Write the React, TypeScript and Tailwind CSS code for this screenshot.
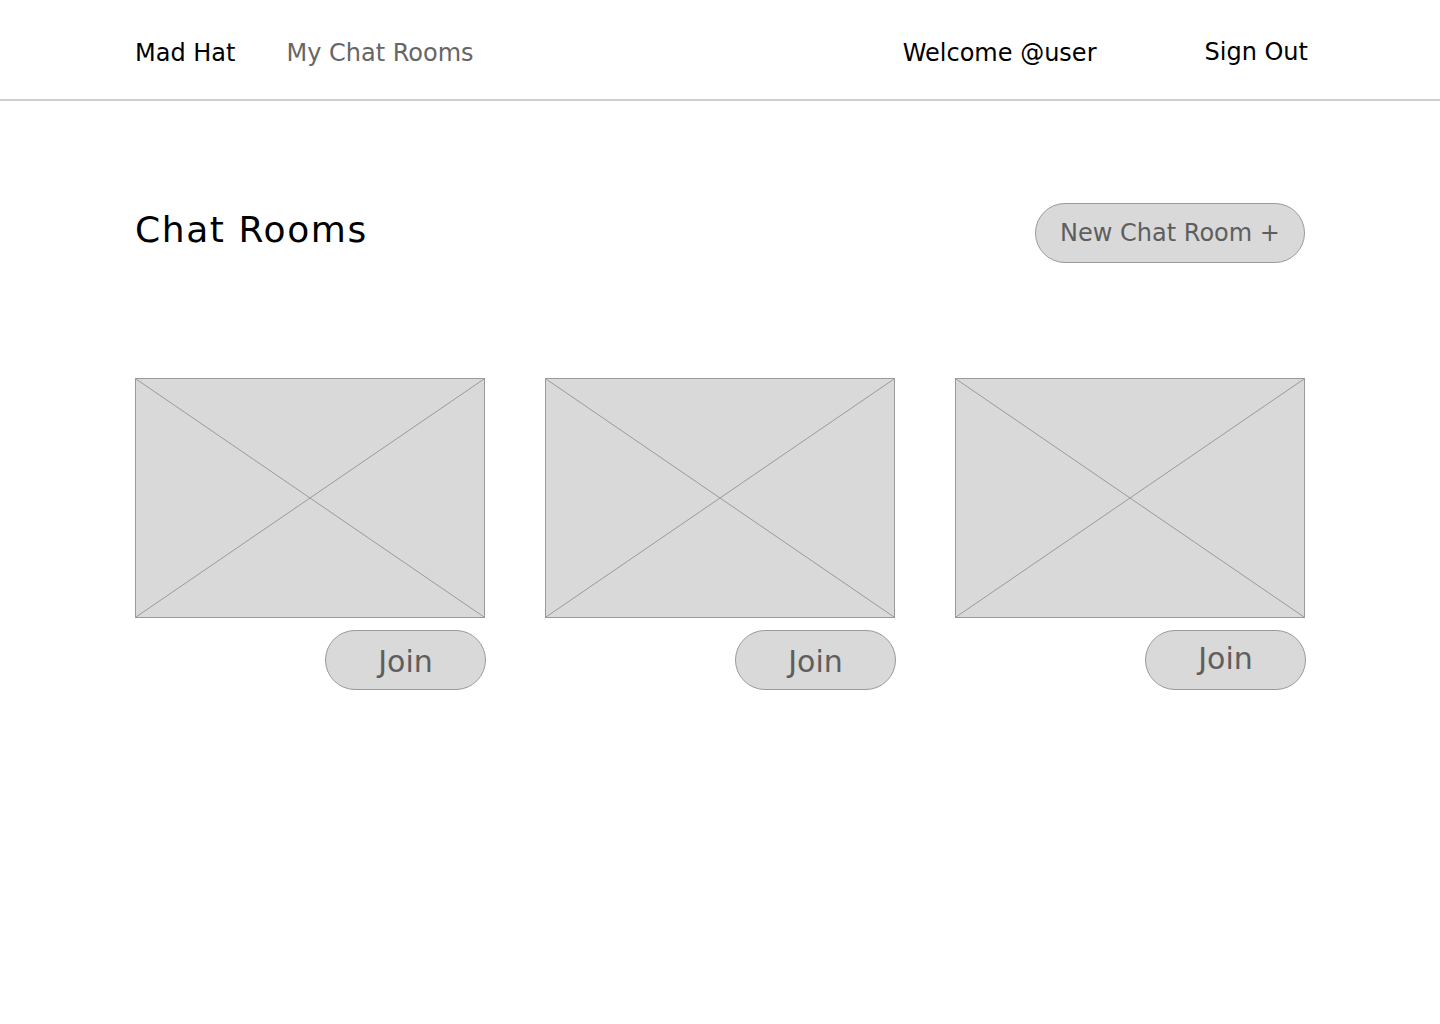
import React from "react";

function Placeholder() {
  return (
    <div className="relative h-[240px] w-full border border-[#9a9a9a] bg-[#d9d9d9]">
      <svg
        className="absolute inset-0 h-full w-full"
        viewBox="0 0 100 100"
        preserveAspectRatio="none"
      >
        <line x1="0" y1="0" x2="100" y2="100" stroke="#9a9a9a" strokeWidth="1" vectorEffect="non-scaling-stroke" />
        <line x1="100" y1="0" x2="0" y2="100" stroke="#9a9a9a" strokeWidth="1" vectorEffect="non-scaling-stroke" />
      </svg>
    </div>
  );
}

function RoomCard({ high = false }: { high?: boolean }) {
  return (
    <div className="flex flex-col">
      <Placeholder />
      <div className="mt-[12px] flex justify-end -mr-px">
        <button
          className={
            high
              ? "flex h-[60px] w-[161px] items-center justify-center rounded-full border border-[#9a9a9a] bg-[#d9d9d9] pb-[2px] text-[30px] leading-none text-[#5e5e5e]"
              : "flex h-[60px] w-[161px] items-center justify-center rounded-full border border-[#9a9a9a] bg-[#d9d9d9] pt-[4px] text-[30px] leading-none text-[#5e5e5e]"
          }
        >
          Join
        </button>
      </div>
    </div>
  );
}

export default function App() {
  return (
    <div
      className="min-h-[1024px] w-full bg-white"
      style={{ fontFamily: '"DejaVu Sans", "Noto Sans", sans-serif' }}
    >
      <nav className="h-[101px] border-b-2 border-[#cfcfcf] pt-[7px]">
        <div className="mx-auto flex h-full w-[1170px] items-center justify-between text-[24px]">
          <div className="flex items-center gap-[51px]">
            <span className="text-black">Mad Hat</span>
            <span className="text-[#666666]">My Chat Rooms</span>
          </div>
          <div className="-mr-[3px] flex items-center gap-[108px]">
            <span className="text-black">Welcome @user</span>
            <span className="-mt-[2px] text-black">Sign Out</span>
          </div>
        </div>
      </nav>

      <main className="mx-auto w-[1170px] pt-[102px]">
        <div className="flex items-center justify-between">
          <h1 className="-mt-[6px] text-[36px] font-normal tracking-[1.6px] text-black">Chat Rooms</h1>
          <button className="flex h-[60px] w-[270px] items-center justify-center rounded-full border border-[#9a9a9a] bg-[#d9d9d9] text-[24px] text-[#5e5e5e]">
            New Chat Room +
          </button>
        </div>

        <div className="mt-[115px] grid grid-cols-3 gap-[60px]">
          <RoomCard />
          <RoomCard />
          <RoomCard high />
        </div>
      </main>
    </div>
  );
}
